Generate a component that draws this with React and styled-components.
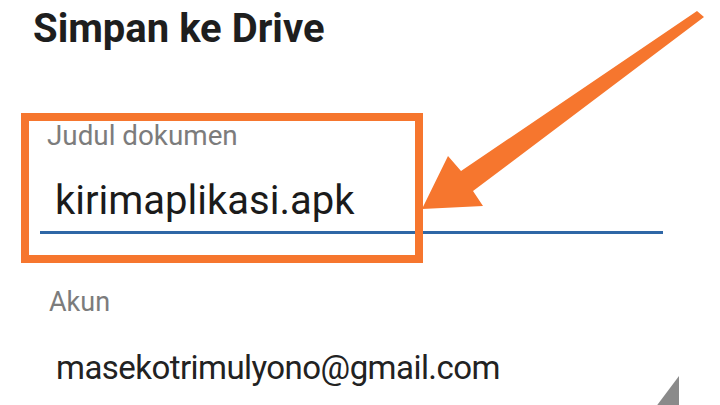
import React from 'react'
import styled, {createGlobalStyle} from 'styled-components'

const GlobalStyle = createGlobalStyle`
  html, body {
    margin: 0;
    padding: 0;
    background: #ffffff;
  }
  body {
    font-family: Roboto, "Noto Sans", "Liberation Sans", sans-serif;
  }
`;

const Screen = styled.div`
  position: relative;
  width: 720px;
  height: 405px;
  overflow: hidden;
  background: #ffffff;
  padding-top: 5px;
  box-sizing: border-box;
  display: flex;
  flex-direction: column;
`;

const Title = styled.h1`
  margin: 0 0 0 33px;
  font-size: 40px;
  line-height: 48px;
  font-weight: 700;
  color: #1e1e1e;
`;

const Field = styled.div`
  margin: ${p => p.top}px 0 0 40px;
  width: ${p => p.width}px;
  display: flex;
  flex-direction: column;
  position: relative;
`;

const Label = styled.div`
  font-size: ${p => p.size}px;
  line-height: 32px;
  color: #7c7c7c;
  padding-left: ${p => p.indent}px;
`;

const TitleInput = styled.div`
  margin-top: 25px;
  padding: 0 0 6px 15px;
  font-size: 40px;
  line-height: 48px;
  color: #1b1b1b;
  border-bottom: 3px solid #2f67a6;
`;

const SpinnerValue = styled.div`
  margin-top: 30px;
  padding-left: 16px;
  font-size: 33px;
  line-height: 40px;
  letter-spacing: -0.55px;
  color: #222222;
`;

const SpinnerArrow = styled.span`
  position: absolute;
  right: 0;
  bottom: -28px;
  width: 0;
  height: 0;
  border-left: 30px solid transparent;
  border-bottom: 40px solid #8a8a8a;
`;

const Highlight = styled.div`
  position: absolute;
  left: 21px;
  top: 113px;
  width: 402px;
  height: 150px;
  box-sizing: border-box;
  border: 8px solid #f6762e;
  pointer-events: none;
`;

const Overlay = styled.svg`
  position: absolute;
  left: 0;
  top: 0;
  pointer-events: none;
`;

export default function App() {
    return (
        <>
            <GlobalStyle/>
            <Screen>
                <Title>Simpan ke Drive</Title>
                <Field top={67} width={623}>
                    <Label size={27.8} indent={7}>Judul dokumen</Label>
                    <TitleInput>kirimaplikasi.apk</TitleInput>
                </Field>
                <Field top={52} width={639}>
                    <Label size={27} indent={9}>Akun</Label>
                    <SpinnerValue>masekotrimulyono@gmail.com</SpinnerValue>
                    <SpinnerArrow/>
                </Field>
                <Highlight/>
                <Overlay width="720" height="405" viewBox="0 0 720 405">
                    <polygon
                        points="697,11 461,171 448,156 422,209 483,206 473,191 704,17"
                        fill="#f6762e"
                    />
                </Overlay>
            </Screen>
        </>
    )
}
